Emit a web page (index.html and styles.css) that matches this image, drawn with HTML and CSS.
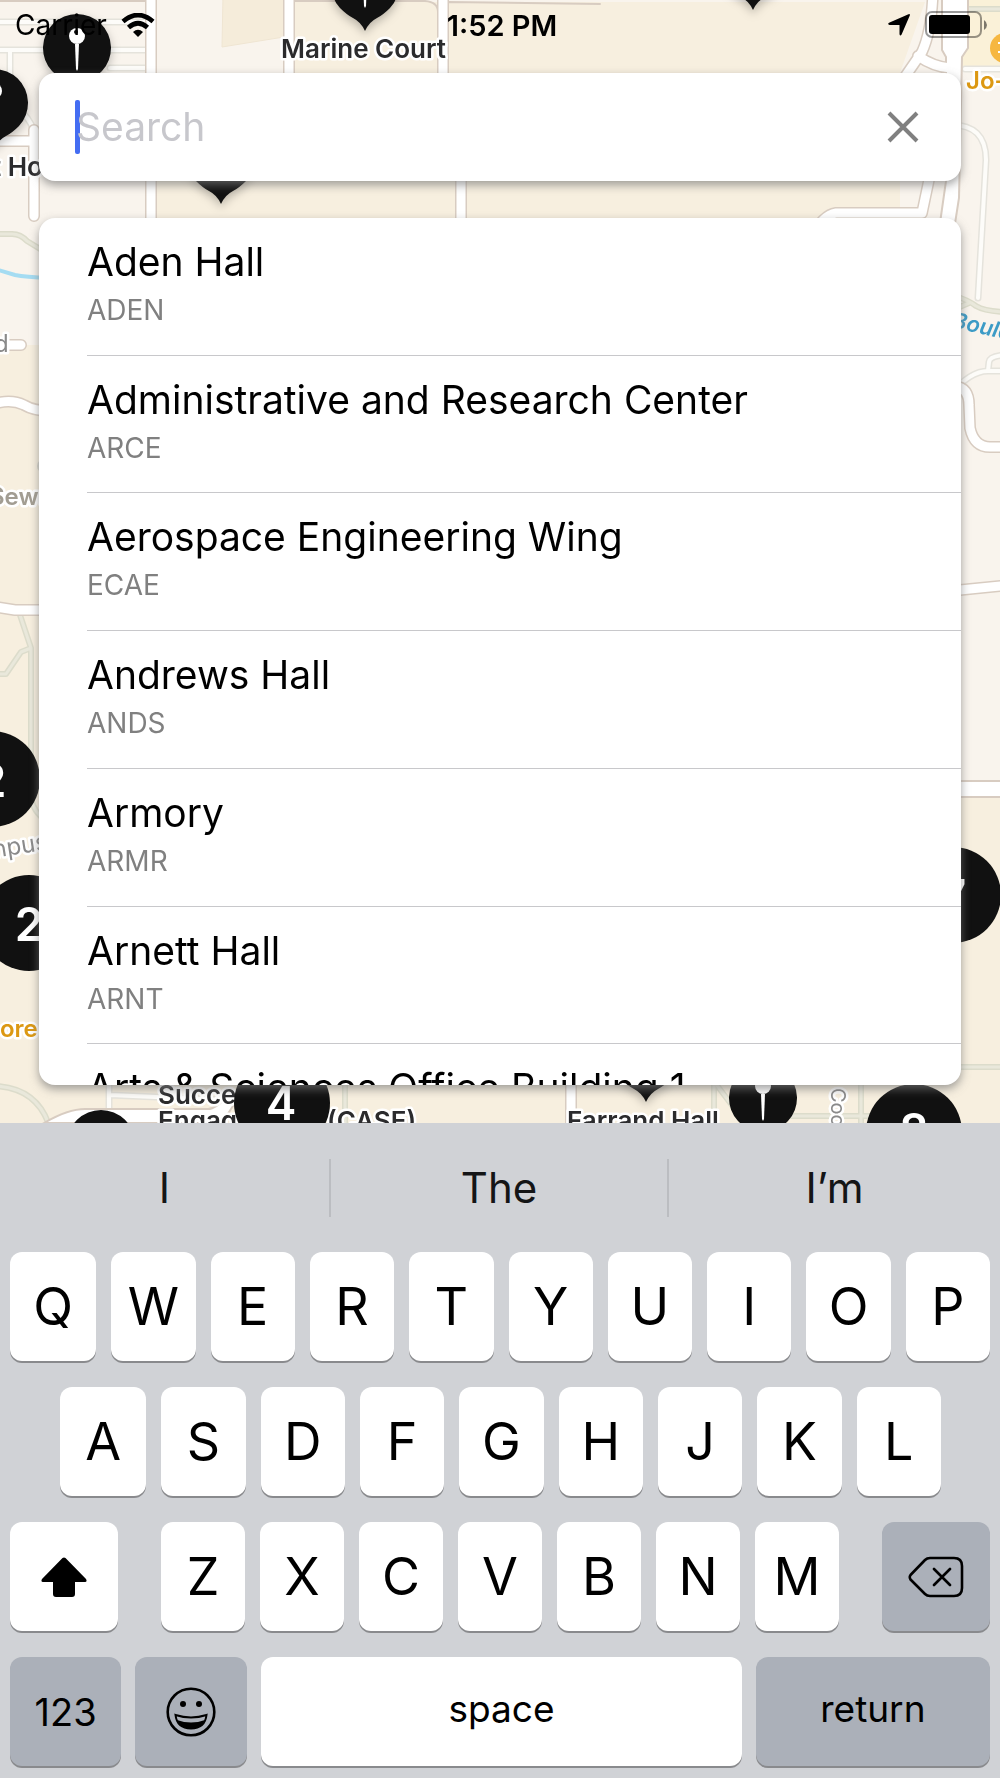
FILE: index.html
```html
<!DOCTYPE html>
<html lang="en">
<head>
<meta charset="utf-8">
<meta name="viewport" content="width=device-width, initial-scale=1">
<title>Campus Map Search</title>
<link rel="stylesheet" href="styles.css">
</head>
<body>
<div class="screen">
  <main class="map-area">
    <svg class="map" viewBox="0 0 1000 1123" preserveAspectRatio="xMidYMin slice" aria-hidden="true">
      <defs>
        <g id="streets">
          <path d="M151-20V260M289-20V120M443 0V100L461 170V260M34 130V216M-10 141H34M-10 345H21M-10 405Q10 398 24 405Q34 411 50 411M-10 606L15 610H60M571 1060V1140M933-10Q932 30 922 52L900 84M918 56Q934 67 950 68M930 175L922 213H836Q822 215 810 240M955 386Q969 388 969 405L970 428Q974 447 990 447H1010M950 591L1010 585"/>
        </g>
        <g id="lanes">
          <path d="M-10 22H146M-10 50H146M110 68H146M10 50V90M22 112Q34 124 34 136M965 69H1010M950 125Q986 124 986 160L978 298M950 395Q970 371 988 371H1010M988 371L989 362Q990 355 1010 355M109 1080V1108M110 1095L225 1100"/>
        </g>
        <g id="paths">
          <path d="M-10 234H10Q20 233 27 241L50 255M19 612L31 648V795Q32 812 48 822M-10 674H6L21 652L31 648M-5 1086Q38 1088 50 1128M345 1080V1130M714 1080V1123M716 1084L740 1116H870M861 1080V1123M955 1067H1010M955 296Q968 300 976 306Q986 312 1010 312M955 309L969 303M968 9H1010"/>
        </g>
        <g id="pin">
          <path class="pin-body" d="M-25 23A34 34 0 1 1 25 23Q18 30 12 33Q4 37 0 46Q-4 37-12 33Q-18 30-25 23Z"/>
          <circle class="pin-mark" cy="-12" r="8"/>
          <path class="pin-mark" d="M-2-4H2L1 21L0 23L-1 21Z"/>
          <circle class="pin-body" cx="-1" cy="-16" r="2"/>
        </g>
      </defs>

      <rect class="land" width="1000" height="1123"/>
      <path class="campus" d="M0 345H60V1123H0ZM295 2H438V100H295ZM448 2H925L900 73V230H466L448 100ZM157 150H456V230H157ZM60 1000H1000V1123H60ZM940 797H1000V1123H940Z"/>
      <path class="block" d="M223-5H284V37L222 47Z"/>
      <path class="shop" d="M968-5H1010V69H962V56L968 48Z"/>
      <path class="stream" d="M-5 269L15 275Q25 277 50 278"/>
      <use href="#paths" class="paths-edge"/>
      <use href="#paths" class="paths-fill"/>
      <use href="#lanes" class="lanes-edge"/>
      <use href="#lanes" class="lanes-fill"/>
      <path class="plaza" d="M-10 1H146M295 1H425Q438 2 438 12M448 12V2L600 4"/>
      <use href="#streets" class="streets-edge"/>
      <path class="avenue" d="M942-5V50L946 57V181L939 230H954L959 198L962 57L968 48V-5Z"/>
      <path class="avenue" d="M950 781H1010V797H950Z"/>
      <path class="avenue" d="M44 1123Q68 1109 85 1109H208Q216 1109 228 1095L240 1095L222 1123Z"/>
      <use href="#streets" class="streets-fill"/>
      <circle class="dot" cx="44" cy="466" r="7"/>

      <circle class="cafe" cx="1005" cy="48" r="15"/>
      <path class="cafe-mark" d="M998 43H1006V52H998"/>

      <g class="shadowed">
        <use href="#pin" x="77" y="48"/>
        <use href="#pin" x="-6" y="103"/>
        <use href="#pin" x="365" y="-15"/>
        <use href="#pin" x="753" y="-36"/>
        <use href="#pin" x="221" y="158"/>
        <use href="#pin" x="646" y="1056"/>
      </g>

      <g class="label">
        <text x="281" y="58">Marine Court</text>
        <text x="-8" y="176">t Ho</text>
        <text x="158" y="1104">Succe</text>
        <text x="158" y="1130">Engag</text>
        <text x="327" y="1130">(CASE)</text>
        <text x="567" y="1130">Farrand Hall</text>
        <text class="label-orange" x="966" y="89">Jo-</text>
        <text class="label-orange" x="0" y="1037">ore</text>
        <text class="label-muted" x="-11" y="505">Sewa</text>
        <text class="label-road" x="-6" y="352">d</text>
        <text class="label-road" transform="translate(-13 859) rotate(-9)">mpus</text>
        <text class="label-road label-small" transform="translate(831 1088) rotate(90)">Coo</text>
        <text class="label-water" transform="translate(951 327) rotate(13)">Bould</text>
      </g>

      <use href="#pin" x="763" y="1098"/>
      <use href="#pin" x="101" y="1144"/>
      <g class="cluster">
        <circle cx="-8" cy="779" r="48"/><text x="-8" y="797">2</text>
        <circle cx="29" cy="923" r="48"/><text x="29" y="941">2</text>
        <circle cx="953" cy="895" r="48"/><text x="953" y="913">7</text>
        <circle cx="282" cy="1103" r="48"/><text x="281" y="1120">4</text>
        <circle cx="914" cy="1132" r="48"/><text x="914" y="1147">8</text>
      </g>
    </svg>

    <header class="status">
      <div class="status-left">
        <span>Carrier</span>
        <svg viewBox="0 0 34 25" width="34" height="25" aria-label="Wi-Fi">
          <path d="M2 8.500Q17-4.500 32 8.500M7.500 14.500Q17 6 26.500 14.500" fill="none" stroke="#000" stroke-width="4.600"/>
          <path d="M12 19Q17 14.500 22 19L17 24Z"/>
        </svg>
      </div>
      <time class="status-time">1:52 PM</time>
      <div class="status-right">
        <svg viewBox="0 0 24 24" width="24" height="24" aria-label="Location">
          <path d="M21.500 1.200Q23.500.5 22.800 2.600L14.600 21.500Q13.200 23.500 12.500 21.200V12H2.600Q0 11.200 2 9.700Z"/>
        </svg>
        <svg viewBox="0 0 64 28" width="64" height="28" aria-label="Battery">
          <rect x="1" y="1" width="55" height="25" rx="6" fill="none" stroke="#000" stroke-opacity=".4" stroke-width="2"/>
          <rect x="4" y="4" width="41" height="19" rx="3"/>
          <path d="M59 9Q62 11 62 14T59 19Z" fill-opacity=".5"/>
        </svg>
      </div>
    </header>

    <form class="search">
      <span class="caret"></span>
      <input class="search-input" type="text" placeholder="Search" aria-label="Search buildings">
      <button class="clear" type="button" aria-label="Close search">
        <svg viewBox="0 0 32 32" width="32" height="32"><path d="M2 2L30 30M30 2L2 30" fill="none" stroke="#808080" stroke-width="4"/></svg>
      </button>
    </form>

    <section class="results" aria-label="Buildings">
      <div class="scroller">
        <ul class="list">
          <li class="row"><span class="name">Aden Hall</span><span class="code">ADEN</span></li>
          <li class="row"><span class="name">Administrative and Research Center</span><span class="code">ARCE</span></li>
          <li class="row"><span class="name">Aerospace Engineering Wing</span><span class="code">ECAE</span></li>
          <li class="row"><span class="name">Andrews Hall</span><span class="code">ANDS</span></li>
          <li class="row"><span class="name">Armory</span><span class="code">ARMR</span></li>
          <li class="row"><span class="name">Arnett Hall</span><span class="code">ARNT</span></li>
          <li class="row"><span class="name">Arts &amp; Sciences Office Building 1</span></li>
        </ul>
      </div>
    </section>
  </main>

  <section class="keyboard" aria-label="Keyboard">
    <div class="suggestions">
      <button type="button">I</button>
      <button type="button">The</button>
      <button type="button">I’m</button>
    </div>
    <div class="keys keys-top">
      <button class="key">Q</button><button class="key">W</button><button class="key">E</button><button class="key">R</button><button class="key">T</button><button class="key">Y</button><button class="key">U</button><button class="key">I</button><button class="key">O</button><button class="key">P</button>
    </div>
    <div class="keys keys-home">
      <button class="key">A</button><button class="key">S</button><button class="key">D</button><button class="key">F</button><button class="key">G</button><button class="key">H</button><button class="key">J</button><button class="key">K</button><button class="key">L</button>
    </div>
    <div class="keys keys-lower">
      <button class="key" aria-label="Shift">
        <svg viewBox="0 0 46 40" width="46" height="40"><path d="M21.500 1Q23 0 24.500 1L45 22Q46.500 25 44 25H34V37Q34 40 31 40H15Q12 40 12 37V25H2Q-.5 25 1 22Z"/></svg>
      </button>
      <div class="letters">
        <button class="key">Z</button><button class="key">X</button><button class="key">C</button><button class="key">V</button><button class="key">B</button><button class="key">N</button><button class="key">M</button>
      </div>
      <button class="key key-dark" aria-label="Delete">
        <svg viewBox="0 0 56 42" width="56" height="42" fill="none" stroke="#000" stroke-width="2.600" stroke-linecap="round" stroke-linejoin="round"><path d="M22 2H46Q54 2 54 10V32Q54 40 46 40H22Q19 40 17 38L2.500 23.500Q1 21 2.500 19L17 4Q19 2 22 2ZM26 13L42 29M42 13L26 29"/></svg>
      </button>
    </div>
    <div class="keys keys-bottom">
      <button class="key key-dark key-num">123</button>
      <button class="key key-dark" aria-label="Emoji">
        <svg viewBox="0 0 50 50" width="50" height="50"><circle cx="25" cy="25" r="23.300" fill="none" stroke="#000" stroke-width="2.600"/><circle cx="17" cy="17" r="3"/><circle cx="33" cy="17" r="3"/><path d="M9.500 28Q25 33 40.500 28Q39 41.500 25 41.500T9.500 28Z" fill="none" stroke="#000" stroke-width="2"/><path d="M11 33Q25 38 39 33Q36 41.500 25 41.500T11 33Z"/></svg>
      </button>
      <button class="key key-word">space</button>
      <button class="key key-dark key-word">return</button>
    </div>
  </section>
</div>
</body>
</html>
```
FILE: styles.css
```css
* {
  box-sizing: border-box;
}

body {
  margin: 0;
  font-family: Inter, "Liberation Sans", sans-serif;
  color: #000;
}

button,
input {
  margin: 0;
  padding: 0;
  border: 0;
  background: none;
  font: inherit;
  color: inherit;
}

svg {
  display: block;
}

.screen {
  display: flex;
  flex-direction: column;
  height: 100vh;
}

/* Map */

.map-area {
  position: relative;
  flex: 1;
  min-height: 0;
  display: flex;
  flex-direction: column;
  padding: 0 39px 38px;
  overflow: hidden;
}

.map {
  position: absolute;
  inset: 0;
  width: 100%;
  height: 100%;
}

.land { fill: #f9f4ed; }
.campus { fill: #f7efdf; }
.block { fill: #f5ecda; stroke: #efe5d2; }
.shop { fill: #faf1d8; }
.stream { fill: none; stroke: #a5dcf2; stroke-width: 4; }
.dot { fill: #d5d3cb; }
.cafe { fill: #f6b740; }
.cafe-mark { fill: none; stroke: #fff; stroke-width: 2; }

.streets-edge,
.streets-fill,
.lanes-edge,
.lanes-fill,
.paths-edge,
.paths-fill,
.plaza {
  fill: none;
  stroke-linecap: round;
  stroke-linejoin: round;
}

.streets-edge { stroke: #d8ccc1; stroke-width: 12; }
.streets-fill { stroke: #fff; stroke-width: 9; }
.lanes-edge { stroke: #e5e3dc; stroke-width: 7; }
.lanes-fill { stroke: #fdfcf9; stroke-width: 4; }
.paths-edge { stroke: #dcdccb; stroke-width: 6; }
.paths-fill { stroke: #e9e8db; stroke-width: 3; }
.plaza { stroke: #d8ccc1; stroke-width: 2; }
.avenue { fill: #fff; stroke: #d8ccc1; stroke-width: 2; }

.pin-body { fill: #111; }
.pin-mark { fill: #fff; }
.shadowed { filter: drop-shadow(0 4px 5px rgba(0, 0, 0, 0.25)); }

.cluster circle { fill: #111; }

.cluster text {
  fill: #fff;
  font-size: 46px;
  font-weight: 600;
  text-anchor: middle;
}

.label text {
  fill: #2b2b2d;
  stroke: #fff;
  stroke-width: 5px;
  stroke-linejoin: round;
  paint-order: stroke;
  font-size: 26px;
  font-weight: 600;
}

.label .label-orange { fill: #dc9812; font-size: 24px; }
.label .label-muted { fill: #a29d92; font-size: 24px; }
.label .label-road { fill: #8a8a8a; font-size: 24px; font-weight: 400; }
.label .label-small { font-size: 20px; }
.label .label-water { fill: #3c9bc6; stroke: none; font-size: 22px; font-style: italic; }

/* Status bar */

.status {
  position: relative;
  display: grid;
  grid-template-columns: 1fr auto 1fr;
  align-items: center;
  height: 50px;
  margin: 0 -28px 23px -24px;
  font-size: 28px;
}

.status-left,
.status-right {
  display: flex;
  align-items: center;
  gap: 14px;
}

.status-right {
  justify-content: flex-end;
}

.status-time {
  font-size: 29px;
  font-weight: 600;
}

/* Search */

.search {
  position: relative;
  display: flex;
  flex: none;
  align-items: center;
  height: 108px;
  padding: 0 38px 0 36px;
  border-radius: 16px;
  background: #fff;
  box-shadow: 0 4px 10px rgba(120, 120, 120, 0.7);
}

.caret {
  width: 5px;
  height: 54px;
  margin-right: -4px;
  border-radius: 2px;
  background: #446df2;
}

.search-input {
  flex: 1;
  min-width: 0;
  outline: 0;
  font-size: 39px;
  line-height: 54px;
}

.search-input::placeholder {
  color: #c7c7cc;
}

.clear {
  padding: 4px;
}

/* Results */

.results {
  position: relative;
  flex: 1;
  min-height: 0;
  margin-top: 37px;
  border-radius: 16px;
  background: #fff;
  box-shadow: 0 4px 10px rgba(120, 120, 120, 0.7);
}

.scroller {
  height: 100%;
  border-radius: 16px;
  overflow-y: auto;
  scrollbar-width: none;
}

.list {
  display: grid;
  grid-auto-rows: 1fr;
  height: 964px;
  margin: 0;
  padding: 0 0 0 48px;
  list-style: none;
}

.row {
  display: flex;
  flex-direction: column;
  gap: 8px;
  padding-top: 20px;
  border-bottom: 1px solid #c8c8cb;
}

.name {
  font-size: 39px;
  line-height: 48px;
}

.code {
  color: #808080;
  font-size: 28px;
  line-height: 32px;
}

/* Keyboard */

.keyboard {
  flex: none;
  display: flex;
  flex-direction: column;
  gap: 26px;
  padding-bottom: 12px;
  background: #d0d2d6;
}

.suggestions {
  display: grid;
  grid-template-columns: 329fr 338fr 333fr;
  align-items: center;
  height: 103px;
  padding-top: 26px;
  color: #141516;
  font-size: 42px;
  line-height: 58px;
}

.suggestions button + button {
  border-left: 2px solid #bbbdc1;
}

.keys {
  display: grid;
  gap: 15px;
  padding: 0 10px;
}

.keys-top {
  grid-template-columns: 86fr repeat(9, 84fr);
}

.keys-home {
  grid-template-columns: 86fr repeat(8, 84fr);
  padding: 0 59px 0 60px;
}

.keys-lower {
  grid-template-columns: 108fr 678fr 108fr;
  gap: 43px;
}

.letters {
  display: grid;
  grid-template-columns: repeat(7, 1fr);
  gap: 15px;
}

.keys-bottom {
  grid-template-columns: 111fr 112fr 480fr 234fr;
  gap: 14px;
}

.key {
  display: flex;
  align-items: center;
  justify-content: center;
  height: 109px;
  border-radius: 12px;
  background: #fff;
  box-shadow: 0 2px 0 #898a8d;
  font-size: 52px;
}

.key-dark {
  background: #abb0b9;
}

.key-num {
  font-size: 38px;
}

.key-word {
  padding-bottom: 6px;
  font-size: 37px;
}
```
